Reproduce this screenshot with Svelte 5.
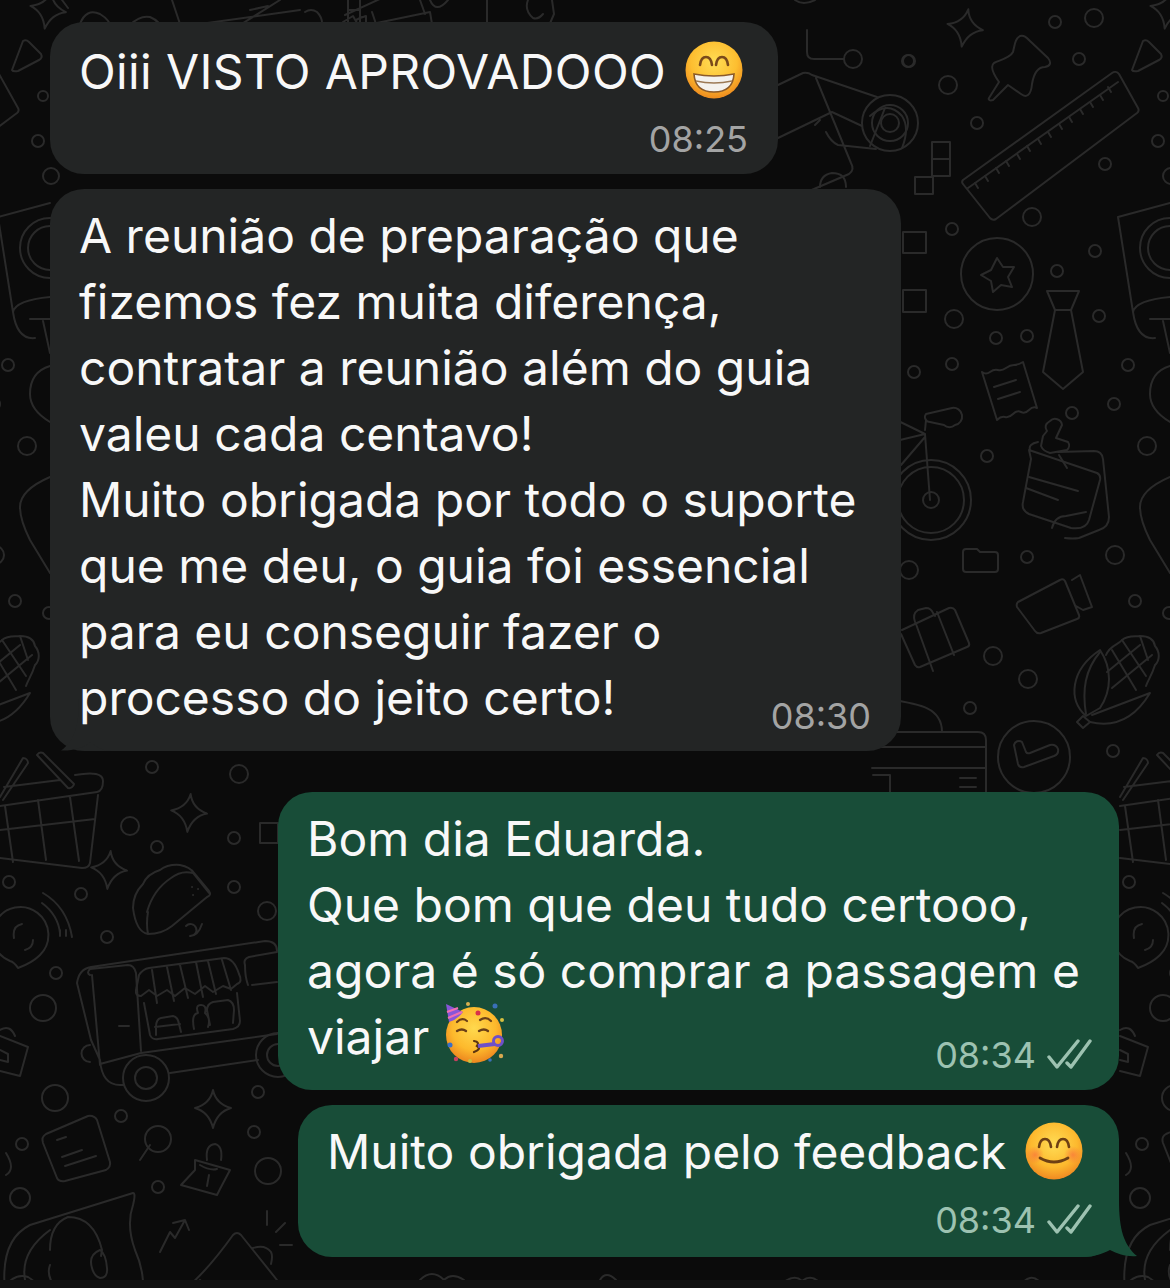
<script>
  const circles = [
    [1055,22,6],[1094,18,9],[909,61,6],[948,85,9],[1079,59,6],[977,123,6],[1163,96,5],[1158,141,6],[1105,164,6],[1032,217,9],[952,229,6],[1095,251,6],[1057,271,6],[954,319,9],[996,338,6],[1027,336,6],[1099,316,6],[952,364,6],[914,372,6],[1128,365,6],
    [1114,404,6],[1072,413,6],[1147,446,9],[987,456,6],[1027,557,6],[1115,555,9],[909,570,9],[1135,601,6],[993,656,9],[1028,679,9],[970,708,6],[1113,751,6],
    [152,767,6],[239,774,9],[130,826,9],[234,838,6],[157,847,6],[9,882,6],[81,894,6],[234,887,6],[267,911,9],
    [107,937,6],[56,973,6],[43,1008,13],[55,1098,13],[121,1116,6],[22,1144,6],[20,1198,10],[158,1187,6],[258,1092,6],[254,1132,6],[268,1171,13],
    [853,59,9],[908,61,6],[1171,176,8],[1169,613,6]
  ];
  const stars = [[965,28,10],[189,813,5],[109,870,5],[213,1109,0],[48,10,10]];
  const lines = [
    'M1112 73a5 5 0 0 1 7 1l19 34a4 4 0 0 1-1 5L996 219a5 5 0 0 1-6-1L963 184a3 3 0 0 1 0-4Z','M968 188L1118 82',
    'M975 183l3 5M985 176l3 5M996 168l3 5M1006 161l3 5M1017 154l3 5M1027 146l3 5M1038 139l3 5M1048 132l3 5M1059 124l3 5M1069 117l3 5M1080 109l3 5M1090 102l3 5M1100 95l3 5M1108 87l3 5',
    'M1020 36C1024 35 1026 37 1030 41L1048 58C1052 63 1050 66 1045 67C1038 67 1034 72 1032 84C1031 96 1026 98 1021 94L1008 85L993 100C990 101 988 100 989 98L999 82C992 72 990 66 994 63C1000 60 1010 58 1013 52C1015 44 1015 39 1020 36Z',
    'M1132 70L1143 41Q1146 39 1149 42L1161 54Q1163 58 1159 60L1138 71Q1133 72 1132 70Z',
    'M932 142h18v34h-18zM932 159h18M915 177h18v17h-18z',
    'M903 232h23v21h-23zM903 290h23v22h-23z',
    'M1047 291h32l-8 19h-16zM1055 310h16l12 62l-20 17l-20-17z',
    'M997 258l6 9l11 0l-6 10l4 10l-11-2l-8 7l-2-11l-10-6l10-5z',
    'M982 372q4 3 8 0t8-2t8-2t8-3t9-3L1037 408q-4-2-8 2t-8 2t-8 2t-8 3t-8 3ZM994 387l22-7M998 399l22-7',
    // bike
    'M880 412L925 434M900 440L925 434L930 500M901 465L925 437M925 430L926 420M926 414l26-6a7 7 0 0 1 3 17a8 8 0 0 1-11 0l-14-3a5 5 0 0 1-4-8Z',
    // note
    'M1029 450l68 23q4 2 3 7l-11 40q-3 10-18 8l-42-14q-8-4-6-12l8-43q-2-9-2-9Z','M1030 450q-2-6 8-8M1058 452l36-1q8 0 9 8l6 58q0 10-10 13l-20 8q-6 1-14 0','M1029 477l49 14M1026 488l32 12','M1052 528q3-12 14-12l20-4',
    'M1050 421a7 7 0 0 1 12 4l-6 13l12 4a6 6 0 0 1-1 8l-17 3q-7-2-9-7l2-10l4-5q-4-6 3-10ZM1059 455l8 13',
    // folder
    'M966 549h11l3 3h15q3 0 3 3v14q0 3-3 3h-29q-3 0-3-3v-17q0-3 3-3Z',
    // camera
    'M1018 602l42-22q3-2 5 1l14 34q1 3-2 4l-36 14q-4 1-6-2l-18-24q-1-3 1-5ZM1072 580l8-5l12 32l-9 3l-7-4',
    // suitcase
    'M902 630l47-22q4-1 6 2l14 33q1 3-2 4l-47 20q-3 1-5-2l-14-31M915 622q-3-8 3-12l8-2q5 0 7 5l2 3M916 624l17 47M937 612l17 43',
    // corn
    'M1100 650C1070 670 1068 700 1086 716L1100 708C1112 690 1112 668 1100 650Z','M1100 652C1085 670 1082 690 1086 714','M1077 722L1083 716L1090 722L1083 728Z','M1090 722C1115 728 1135 718 1150 693L1092 715',
    'M1106 655C1110 645 1118 645 1122 640C1128 635 1136 637 1140 636C1150 636 1154 640 1155 646C1160 652 1160 660 1155 665C1152 675 1148 680 1146 686','M1122 640L1146 676M1112 650L1136 690M1140 636L1148 660M1107 672L1140 645M1112 688L1152 655',
    // dome + box
    'M885 732V701M887 699c32 5 55 8 55 33M890 732h88q8 0 8 8v52M872 747h114M872 768h114M960 778h16M960 787h16M890 795v-20H873',
    // clock
    'M1014 745a5 5 0 0 1 8-3l4 10q1 2 4 1l20-8q6-1 8 4q1 5-4 7l-30 11q-5 1-6-3Z',
    // loops right
    'M1170 477Q1140 490 1140 507Q1140 520 1150 540L1170 573',
    'M1170 366q-20 6-20 28q0 16 20 28',
    'M1118 217L1170 203M1118 217L1133 312Q1137 340 1155 338M1133 312Q1136 300 1170 297M1150 319h20M1163 321l7 32',
    // basket
    'M0 797L23 758a5 5 0 0 1 5 5L3 800M37 755a5 5 0 0 1 6-2L74 784a5 5 0 0 1-6 4ZM4 787L60 780M75 775q28-5 28 6q0 10-6 11L0 806M98 795l-8 68q-1 5-8 5L0 858M5 806l8 56M38 800l8 60M70 797l9 64M0 830l95-11',
    // taco
    'M160 870q8-6 20-5q10 2 14 8l15 18q3 4-2 6L172 926q-10 8-24 8q-12-2-15-26q0-14 10-24q4-10 17-14ZM147 912q6-22 24-34q10-8 22-5L209 893M148 912q-2 12 0 22M192 887h.1M198 889h.1M193 895h.1M186 926a6 6 0 1 1 4 10q8 0 12-12',
    // sound bubble
    'M18 968q-4-6-8-7a28 28 0 1 1 30-6q-8 8-22 13ZM43 893q24 14 29 44M42 903q16 12 18 30M14 938q-2-12 8-14M33 940q0 8-8 10M60 930v6M66 930v6',
    // briefcase
    'M0 1030q10-6 15 6M0 1036l28 11l-8 29l-20-5M0 1050l8 4v8l-8-2',
    // truck
    'M77 983q2-14 14-16L265 941q12 0 12 10M90 975q-4-2 0-6L128 965q6 0 8 8L141 1051M92 975L100 1065M77 983L91 1040L100 1060Q102 1085 120 1085L124 1085M119 1026h10M100 1064L141 1053M141 1053L277 1034M170 1073L258 1060M90 1045a8 8 0 0 0 0 17',
    'M139 975q4-6 10-7l75-10q10 0 15 16q4 8-2 10l-6 5l-8-3l-10 6l-8-6l-10 8l-10-6l-10 8l-8-6l-10 6l-8-6l-8 6q-6 0-5-6ZM152 970l5 33M167 967l7 34M180 965l8 33M196 962l7 35M208 961l8 33M222 960l9 30',
    'M144 1003l6 32q2 5 8 4l75-10q7-2 7-8l-3-28M156 1035v-8q0-8 5-9l12-2q5 1 6 8l2 8M155 1027l25-3M194 1029q-3-15 4-16q-3-8 3-8q6 0 4 8q6 5 3 14M210 1025l-3-15q0-6 6-8l15-2q6 2 6 10l-1 13',
    'M245 965q-2-6 4-8L277 952M252 985L277 982M248 985q-3-8-3-20',
    // note bottom
    'M43 1143q-2-6 3-9L88 1116q6-1 9 4L110 1162q1 5-4 8L65 1181q-6 1-8-3ZM57 1140l9-3M62 1157l20-7M65 1166l31-10',
    'M140 1160l10-15',
    'M200 1165q10 6 17 4M207 1160q-2-15 8-16q8 2 6 16M195 1160l35 10l-10 19l-3 6l-36-10l14-15ZM209 1175l-2 11',
    'M160 1252l10-20l5 6l10-18l-12 3M185 1220l4 10',
    // mug / headset
    'M5 1290Q0 1240 30 1225L133 1193Q136 1193 133 1205Q126 1225 135 1250Q144 1270 143 1290M50 1250q0-26 18-33q26 0 34 33l-1 6M50 1265q-4 10 5 22M100 1250q-12 5-8 18q2 8 8 10q8 0 7-10q-1-14-7-18Z',
    'M190 1285q20-18 43-50q4-4 8 0l36 45M253 1248q12-4 18 4q2 4 0 12M267 1225v-14M276 1232l9-9M280 1245h12M200 1280l8 8',
    // top edge shapes
    'M80 24q6-16 20-10q10 6 12 15M62 0l6 8M130 25q10-10 20-8q10 4 14 15M172 0l8 24M200 24L300 10M250 10l18-4M232 30L280 0M305 12q6-4 12 0q6 6 5 14M348 0v24M360 0v24M348 10h12M345 15L395 -8M343 22l10-6l8 14M372 24L430 12l2 12M420 0l5 14M430 0q6 14 18 0M487 0v26M487 26h15M528 0q-4 10 5 18q5 2 10-4M552 0l2 14l-6 14',
    'M372 12l4 12M360 18l6-2v10M356 20l6-3',
    // right of first bubble
    'M807 30v22q0 7 7 7h30M778 85L803 73Q808 72 812 75L877 97M816 78L851 163Q855 170 849 174L800 195M778 138L832 112M820 120l-5 5M826 132q5 10 12 13l38 4M832 112L862 126',
    'M885 108l-15 38M902 148q8-20 0-32q-14-16-32 0M795 0q8 6 20 0q4-4 6-10M820 187q0-12 12-14q14 0 14 14',
    // between
    'M260 823h18v20h-18z',
    'M1145 1280q-5-28 25-50M1126 1175q10-6 0-22',
    'M1126 1285q10-12 22-8q14 8 8 20M1020 1286q10-14 20-4M780 1285q14-12 22-4q10-8 20 4M600 1280q6-10 16 0M420 1280q12-12 24 0q8-8 20 0'
  ];
</script>

{#snippet grin()}
  <svg class="emoji" viewBox="0 0 60 60" aria-hidden="true">
    <defs>
      <radialGradient id="ga" cx="50%" cy="36%" r="62%"><stop offset="0" stop-color="#ffdd55"/><stop offset=".65" stop-color="#fdbe30"/><stop offset="1" stop-color="#ef8f20"/></radialGradient>
    </defs>
    <circle cx="30" cy="30" r="28.5" fill="url(#ga)"/>
    <path d="M16 25q1-8 6-8t6 8M32 25q1-8 6-8t6 8" fill="none" stroke="#7a4a1a" stroke-width="2.6" stroke-linecap="round"/>
    <path d="M10 34q20 4 40 0q-1 18-20 18T10 34Z" fill="#f4f2ee" stroke="#8b5a2a" stroke-width="1.6"/>
    <path d="M12 41q18 4 36 0" fill="none" stroke="#9c7a55" stroke-width="1.6"/>
  </svg>
{/snippet}

{#snippet party()}
  <svg class="emoji party" viewBox="0 0 66 66" aria-hidden="true">
    <defs>
      <radialGradient id="gb" cx="50%" cy="38%" r="60%"><stop offset="0" stop-color="#ffd94e"/><stop offset=".65" stop-color="#fdb92c"/><stop offset="1" stop-color="#ee8a20"/></radialGradient>
    </defs>
    <circle cx="33" cy="35" r="28" fill="url(#gb)"/>
    <path d="M5 4L8 22Q16 20 22 12Z" fill="#8855d8"/>
    <path d="M6 12L17 8M7 18L21 12" stroke="#f06fb0" stroke-width="2"/>
    <circle cx="37" cy="13" r="2.5" fill="#d8304a"/><circle cx="27" cy="4" r="2" fill="#d8b050"/><circle cx="54" cy="6" r="2.5" fill="#3a70b8"/><circle cx="61" cy="20" r="2" fill="#d8c040"/><circle cx="9" cy="45" r="2.5" fill="#3a70c8"/><circle cx="15" cy="59" r="2.2" fill="#c84060"/><circle cx="29" cy="61" r="2" fill="#c8c040"/><circle cx="60" cy="56" r="2.2" fill="#d8a850"/><circle cx="49" cy="60" r="1.8" fill="#3a70b8"/>
    <path d="M16 22q5-5 10-1M39 20q6-4 11 1" fill="none" stroke="#6b4018" stroke-width="2.2" stroke-linecap="round"/>
    <path d="M16 31q5-3 9 0M38 31q5-3 9 0" fill="none" stroke="#6b4018" stroke-width="2.4" stroke-linecap="round"/>
    <path d="M33 41q6 1 3 5q5 3-3 6" fill="none" stroke="#5b3410" stroke-width="2.2" stroke-linecap="round"/>
    <path d="M37 46L54 44" stroke="#6e50c8" stroke-width="4"/>
    <circle cx="57" cy="41" r="4.500" fill="none" stroke="#6e50c8" stroke-width="3"/>
  </svg>
{/snippet}

{#snippet smile()}
  <svg class="emoji" viewBox="0 0 60 60" aria-hidden="true">
    <defs>
      <radialGradient id="gc" cx="50%" cy="38%" r="62%"><stop offset="0" stop-color="#ffdc55"/><stop offset=".65" stop-color="#fdb92e"/><stop offset="1" stop-color="#f08a22"/></radialGradient>
      <radialGradient id="gd"><stop offset="0" stop-color="#f8703c" stop-opacity=".7"/><stop offset="1" stop-color="#f8703c" stop-opacity="0"/></radialGradient>
    </defs>
    <circle cx="30" cy="30" r="28.5" fill="url(#gc)"/>
    <circle cx="11" cy="34" r="9" fill="url(#gd)"/><circle cx="49" cy="34" r="9" fill="url(#gd)"/>
    <path d="M15 26q1-8 6-8t6 8M33 26q1-8 6-8t6 8" fill="none" stroke="#6e4014" stroke-width="2.6" stroke-linecap="round"/>
    <path d="M16 37q14 8 28 0" fill="none" stroke="#6e4014" stroke-width="2.8" stroke-linecap="round"/>
  </svg>
{/snippet}

{#snippet ticks()}
  <svg class="ticks" viewBox="0 0 46 32" aria-hidden="true">
    <path d="M3 19L11 29L32 3M21 25L25 29L44 3" fill="none" stroke="currentColor" stroke-width="3.4" stroke-linecap="round" stroke-linejoin="round"/>
  </svg>
{/snippet}

<div class="page">
  <svg class="wall" viewBox="0 0 1170 1280" aria-hidden="true">
    <defs>
      <path id="star" d="M0-19Q3-5 18-1Q4 3 0 19Q-4 3-18-1Q-3-5 0-19Z"/>
      <g id="tile">
        {#each circles as c}<circle cx={c[0]} cy={c[1]} r={c[2]}/>{/each}
        <circle cx="997" cy="274" r="36"/><circle cx="931" cy="500" r="40"/><circle cx="931" cy="500" r="33"/><circle cx="931" cy="500" r="8"/>
        <circle cx="1034" cy="757" r="36"/><circle cx="890" cy="123" r="28"/><circle cx="890" cy="123" r="18"/><circle cx="890" cy="123" r="9"/>
        <circle cx="1170" cy="248" r="30"/><circle cx="1170" cy="248" r="22"/><circle cx="146" cy="1078" r="23"/><circle cx="146" cy="1078" r="11"/>
        <circle cx="278" cy="1055" r="22"/><circle cx="278" cy="1055" r="11"/>
        <circle cx="158" cy="1139" r="13"/>
        {#each stars as s}<use href="#star" transform="translate({s[0]} {s[1]}) rotate({s[2]})"/>{/each}
        {#each lines as d}<path {d}/>{/each}
      </g>
    </defs>
    <use href="#tile"/><use href="#tile" x="1120"/><use href="#tile" x="-1120"/>
  </svg>

  <div class="thread">
    <section class="bubble in first">
      <p>Oiii VISTO APROVADOOO {@render grin()}</p>
      <div class="meta"><time>08:25</time></div>
    </section>

    <section class="bubble in second">
      <p class="flat">A reunião de preparação que<br>fizemos fez muita diferença,<br>contratar a reunião além do guia<br>valeu cada centavo!<br>Muito obrigada por todo o suporte<br>que me deu, o guia foi essencial<br>para eu conseguir fazer o<br>processo do jeito certo!</p>
      <div class="meta"><time>08:30</time></div>
      <svg class="tail tail-in" viewBox="0 0 50 52" aria-hidden="true"><path d="M18 0C18 25 14 42 0 51.500C12 52 22 49 30 43C36 49 44 52 50 52L50 0Z"/></svg>
    </section>

    <section class="bubble out third">
      <p class="flat">Bom dia Eduarda.<br>Que bom que deu tudo certooo,<br>agora é só comprar a passagem e<br>viajar {@render party()}</p>
      <div class="meta"><time>08:34</time>{@render ticks()}</div>
    </section>

    <section class="bubble out fourth">
      <p>Muito obrigada pelo feedback {@render smile()}</p>
      <div class="meta"><time>08:34</time>{@render ticks()}</div>
      <svg class="tail tail-out" viewBox="0 0 57 57" aria-hidden="true"><path d="M39 0C39 30 44 45 57 56C47 57 38 54 30 50C22 54 14 57 0 57L0 0Z"/></svg>
    </section>
  </div>
</div>
<div class="strip"></div>

<style>
  :global(body) { margin: 0; background: #0c0c0c; }
  .page { position: relative; height: 1280px; overflow: hidden; background: #0b0b0b; }
  .strip { height: 8px; background: #121212; }
  .wall { position: absolute; inset: 0; width: 1170px; height: 1280px; fill: none; stroke: #2a2a2a; stroke-width: 2; stroke-linecap: round; stroke-linejoin: round; }
  .thread { position: relative; display: flex; flex-direction: column; padding: 22px 51px 0 50px; font-family: Inter, "Liberation Sans", sans-serif; }
  .bubble { position: relative; display: grid; box-sizing: border-box; border-radius: 34px; padding: 14px 30px 20px 29px; color: #f8f8f8; font-size: 48px; line-height: 66px; }
  .bubble > * { grid-area: 1 / 1; }
  .bubble > p, .bubble > .meta { position: relative; z-index: 1; }
  .in { align-self: flex-start; background: #232525; }
  .out { align-self: flex-end; background: #184d38; }
  .first { width: 728px; }
  .first p { padding-top: 3px; padding-bottom: 49px; letter-spacing: 0.38px; }
  .second { width: 851px; margin-top: 15px; }
  .third { width: 841px; margin-top: 41px; }
  .fourth { width: 821px; margin-top: 15px; }
  p { margin: 0; padding-bottom: 52px; }
  p.flat { padding-bottom: 0; }
  .meta { align-self: end; justify-self: end; display: flex; align-items: center; gap: 10px; height: 32px; margin-bottom: -1px; font-size: 36px; line-height: 32px; color: #a3a4a4; }
  .out .meta { color: #9dc2b1; margin-right: -3px; }
  .fourth .meta { margin-bottom: 1px; }
  .emoji { display: inline-block; width: 60px; height: 60px; vertical-align: -2px; margin: -10px 0 -10px 4px; }
  .first .emoji { vertical-align: -1px; }
  .party { width: 66px; height: 66px; vertical-align: -2px; margin-left: -2px; }
  .ticks { width: 46px; height: 32px; margin-top: -2px; color: #9dc2b1; }
  .tail { position: absolute; bottom: 0; }
  .tail-in { left: -18px; width: 50px; height: 52px; fill: #232525; }
  .tail-out { right: -18px; width: 57px; height: 57px; fill: #184d38; }
</style>
